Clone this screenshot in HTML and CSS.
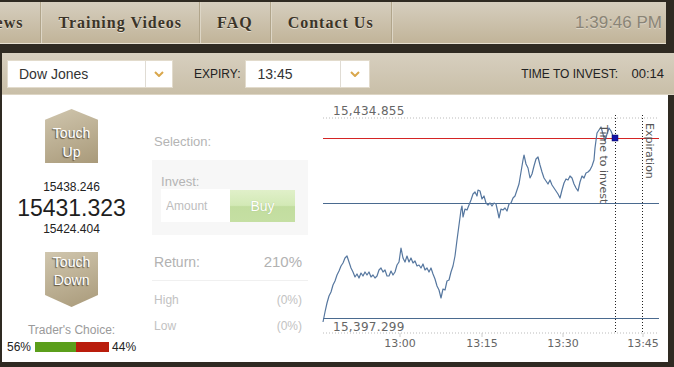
FILE: index.html
```html
<!DOCTYPE html>
<html lang="en">
<head>
  <meta charset="UTF-8">
  <title>Touch Trading</title>
  <link rel="stylesheet" href="styles.css">
</head>
<body>
  <nav class="nav">
    <ul class="menu">
      <li>News</li>
      <li>Training Videos</li>
      <li>FAQ</li>
      <li>Contact Us</li>
    </ul>
    <div class="clock">1:39:46 PM</div>
  </nav>

  <div class="toolbar">
    <div class="select asset">
      <span class="value">Dow Jones</span>
      <span class="arrow"><svg width="10" height="6" viewBox="0 0 10 6"><polyline points="1,1 5,5 9,1" fill="none" stroke="#d9a74c" stroke-width="2"/></svg></span>
    </div>
    <span class="label">EXPIRY:</span>
    <div class="select expiry">
      <span class="value">13:45</span>
      <span class="arrow"><svg width="10" height="6" viewBox="0 0 10 6"><polyline points="1,1 5,5 9,1" fill="none" stroke="#d9a74c" stroke-width="2"/></svg></span>
    </div>
    <div class="timer"><span class="label">TIME TO INVEST:</span> <span class="countdown">00:14</span></div>
  </div>

  <div class="trade">
    <div class="col-touch">
      <div class="touch up">Touch<br>Up</div>
      <div class="rates">
        <div class="rate">15438.246</div>
        <div class="rate current">15431.323</div>
        <div class="rate">15424.404</div>
      </div>
      <div class="touch down">Touch<br>Down</div>
      <div class="choice-title">Trader's Choice:</div>
      <div class="choice">
        <span>56%</span>
        <div class="choice-bar">
          <div class="bar-up" style="width: 56%"></div>
          <div class="bar-down" style="width: 44%"></div>
        </div>
        <span>44%</span>
      </div>
    </div>

    <div class="col-order">
      <div class="caption">Selection:</div>
      <div class="invest-box">
        <div class="caption">Invest:</div>
        <div class="invest-row">
          <input class="amount" type="text" placeholder="Amount">
          <button class="buy">Buy</button>
        </div>
      </div>
      <div class="return-row">
        <span>Return:</span>
        <span>210%</span>
      </div>
      <div class="stat-row"><span>High</span><span>(0%)</span></div>
      <div class="stat-row"><span>Low</span><span>(0%)</span></div>
    </div>

    <div class="col-chart">
      <svg width="348" height="267" viewBox="320 95 348 267">
        <line x1="323" y1="118" x2="657" y2="118" stroke="#bbb" stroke-dasharray="1 2"/>
        <line x1="323" y1="333" x2="657" y2="333" stroke="#bbb" stroke-dasharray="1 2"/>
        <line x1="400" y1="333" x2="400" y2="337" stroke="#ccc"/>
        <line x1="482" y1="333" x2="482" y2="337" stroke="#ccc"/>
        <line x1="563" y1="333" x2="563" y2="337" stroke="#ccc"/>
        <line x1="643" y1="333" x2="643" y2="337" stroke="#ccc"/>

        <line x1="323" y1="203.5" x2="659" y2="203.5" stroke="#4a6a8f" stroke-width="1"/>
        <line x1="323" y1="318.5" x2="659" y2="318.5" stroke="#4a6a8f" stroke-width="1"/>
        <line x1="323" y1="138.5" x2="659" y2="138.5" stroke="#d42424" stroke-width="1"/>

        <line x1="615.5" y1="115" x2="615.5" y2="333" stroke="#222" stroke-dasharray="1 2"/>
        <line x1="642.5" y1="115" x2="642.5" y2="333" stroke="#222" stroke-dasharray="1 2"/>

        <polyline fill="none" stroke="#56779f" stroke-width="1.2" stroke-linejoin="round"
          points="323,322 325,312 327,303 329,296 331,292 333,285 335,281 337,275 339,271 341,266 343,263 345,258 347,256 349,262 351,268 353,272 355,277 357,274 359,278 361,273 363,276 365,272 367,275 369,272 371,277 373,275 375,278 377,276 379,270 381,268 383,272 385,270 387,276 389,276 391,271 393,275 395,272 397,265 399,262 401,248 403,258 405,262 407,256 409,262 411,258 413,263 415,261 417,266 419,265 421,268 423,264 425,270 427,268 429,272 431,268 433,274 435,279 437,286 439,290 441,298 443,289 445,290 447,281 449,280 451,272 453,266 455,256 457,240 459,225 461,210 462,206 463,217 465,209 467,210 469,205 471,200 473,194 475,192 477,196 478,190 480,191 482,199 484,196 486,203 488,205 490,203 492,206 494,203 496,204 498,213 499,218 501,209 503,210 505,208 507,211 509,204 511,203 513,198 515,196 517,190 519,184 521,172 523,160 524,155 526,164 528,168 530,178 532,174 534,166 536,159 538,157 540,165 542,172 544,178 546,181 548,184 550,180 552,185 554,188 556,191 558,194 560,198 562,190 564,183 566,179 568,180 570,176 572,178 574,184 576,188 578,191 580,182 582,176 584,178 586,173 588,172 590,170 592,166 594,160 595,148 597,133 599,130 601,127 603,134 605,141 607,134 609,128 611,131 613,136 615,138"/>

        <rect x="612" y="135" width="6" height="6" fill="#1414a8" stroke="#0a0a60" stroke-width="0.5"/>

        <text class="axis-val" x="333" y="115">15,434.855</text>
        <text class="axis-val" x="333" y="331">15,397.299</text>
        <text class="axis-time" x="400" y="347">13:00</text>
        <text class="axis-time" x="482" y="347">13:15</text>
        <text class="axis-time" x="563" y="347">13:30</text>
        <text class="axis-time" x="643" y="347">13:45</text>

        <text class="plot-label" transform="translate(600,125) rotate(90)">Time to invest</text>
        <text class="plot-label" transform="translate(646,123) rotate(90)">Expiration</text>
      </svg>
    </div>
  </div>
</body>
</html>
```

FILE: styles.css
```css
body {
  margin: 0;
  background-color: #2f2a22;
  font-family: 'Liberation Sans', Arial, sans-serif;
  width: 674px;
  height: 367px;
  overflow: hidden;
}

.nav {
  display: flex;
  align-items: center;
  margin-top: 2px;
  width: 666px;
  height: 41px;
  background: linear-gradient(#d6cebe, #c1b499);
  border-bottom: 1px solid #e8e1d2;
  overflow: hidden;
}
.menu {
  display: flex;
  list-style: none;
  margin: 0 0 0 -34px;
  padding: 0;
  height: 100%;
}
.menu li {
  padding: 0 17px;
  line-height: 41px;
  font-family: 'Liberation Serif', 'Times New Roman', serif;
  font-weight: bold;
  font-size: 16px;
  letter-spacing: 1px;
  color: #3b3428;
  text-shadow: 0 1px 0 rgba(255, 255, 255, 0.55);
  border-right: 1px solid #b1a58b;
  box-shadow: 1px 0 0 #ddd6c6;
}
.clock {
  margin-left: auto;
  padding-right: 4px;
  font-size: 17px;
  color: #8a8476;
  text-shadow: 0 1px 0 rgba(255, 255, 255, 0.4);
}

.toolbar {
  display: flex;
  align-items: center;
  margin: 9px 0 0 2px;
  height: 42px;
  padding: 0 10px 0 5px;
  background: linear-gradient(#d7cfbf, #c9bfa8);
  border-bottom: 1px solid #ddd5c4;
  box-sizing: border-box;
  width: 672px;
}
.select {
  display: flex;
  height: 28px;
  background: #fff;
  border: 1px solid #e2dbcc;
  box-sizing: border-box;
}
.select .value {
  flex: 1;
  line-height: 27px;
  padding-left: 11px;
  font-size: 14px;
  color: #333;
}
.select .arrow {
  display: flex;
  align-items: center;
  justify-content: center;
  border-left: 1px solid #e0dcd4;
}
.asset { width: 166px; }
.asset .arrow { width: 26px; }
.expiry { width: 125px; }
.expiry .arrow { width: 28px; }
.toolbar .label {
  font-size: 12px;
  color: #222;
}
.toolbar > .label {
  margin: 0 5px 0 21px;
}
.timer {
  margin-left: auto;
  font-size: 12px;
}
.countdown {
  margin-left: 10px;
  font-size: 13px;
  color: #222;
}

.trade {
  display: flex;
  margin-left: 2px;
  width: 666px;
  height: 267px;
  background: #fff;
}

.col-touch {
  width: 140px;
  display: flex;
  flex-direction: column;
  align-items: center;
  padding-top: 14px;
  box-sizing: border-box;
}
.touch {
  width: 53px;
  box-sizing: border-box;
  text-align: center;
  font-size: 14px;
  line-height: 18px;
  color: #fff;
  background: linear-gradient(160deg, #d0c6ae, #a99a7a);
  text-shadow: -1px 1px 1px rgba(70, 58, 36, 0.8);
}
.touch.up {
  height: 54px;
  padding-top: 15px;
  line-height: 19px;
  clip-path: polygon(50% 0, 100% 20%, 100% 100%, 0 100%, 0 20%);
}
.touch.down {
  height: 55px;
  margin-top: 16px;
  padding-top: 1px;
  clip-path: polygon(0 0, 100% 0, 100% 78%, 50% 100%, 0 78%);
}
.rates {
  margin-top: 17px;
  text-align: center;
  color: #222;
}
.rate {
  font-size: 12px;
  line-height: 14px;
}
.rate.current {
  font-size: 23px;
  line-height: 28px;
  color: #1e1e1e;
}
.choice-title {
  margin-top: 16px;
  font-size: 12px;
  line-height: 14px;
  color: #9a9a9a;
}
.choice {
  display: flex;
  align-items: center;
  margin-top: 5px;
  font-size: 12px;
  color: #222;
  height: 10px;
}
.choice-bar {
  display: flex;
  width: 74px;
  height: 10px;
  margin: 0 3px 0 4px;
}
.bar-up { background: #5b9e1b; }
.bar-down { background: #b91d0c; }

.col-order {
  width: 180px;
  padding: 39px 12px 0 11px;
  box-sizing: border-box;
}
.caption {
  font-size: 13px;
  line-height: 16px;
  color: #b4b4b4;
}
.col-order > .caption {
  padding-left: 2px;
}
.invest-box {
  margin-top: 10px;
  padding: 14px 12px 13px 9px;
  background: #f7f7f7;
}
.invest-row {
  display: flex;
  height: 32px;
}
.amount {
  width: 69px;
  height: 33px;
  margin-top: -1px;
  border: none;
  padding: 0 0 0 5px;
  box-sizing: border-box;
  font-family: inherit;
  font-size: 12px;
  background: #fff;
  outline: none;
}
.amount::placeholder { color: #bdbdbd; }
.buy {
  width: 65px;
  border: none;
  padding: 0;
  font-family: inherit;
  font-size: 14px;
  color: #fff;
  text-shadow: 0 0 1px rgba(120, 150, 80, 0.5);
  background: linear-gradient(#e0f0c9 0%, #d3e9b6 48%, #c2dd9f 52%, #c5dfa3 100%);
}
.return-row,
.stat-row {
  display: flex;
  justify-content: space-between;
  padding: 0 6px 0 2px;
}
.return-row {
  margin-top: 17px;
  padding-bottom: 8px;
  border-bottom: 1px solid #f0f0f0;
  font-size: 14px;
  line-height: 20px;
  color: #b2b2b2;
}
.return-row span:last-child { font-size: 15px; }
.stat-row {
  font-size: 12px;
  line-height: 16px;
  color: #c2c2c2;
  margin-top: 11px;
}
.stat-row + .stat-row { margin-top: 10px; }
.stat-row span:last-child { padding-right: -1px; }

.col-chart {
  width: 348px;
}
.col-chart svg {
  display: block;
}
.axis-val {
  font-family: 'DejaVu Sans', sans-serif;
  font-size: 12px;
  fill: #666;
  letter-spacing: 0.3px;
}
.axis-time {
  font-family: 'DejaVu Sans', sans-serif;
  font-size: 11px;
  fill: #666;
  text-anchor: middle;
}
.plot-label {
  font-family: 'DejaVu Sans', sans-serif;
  font-size: 11px;
  fill: #555;
}
```
